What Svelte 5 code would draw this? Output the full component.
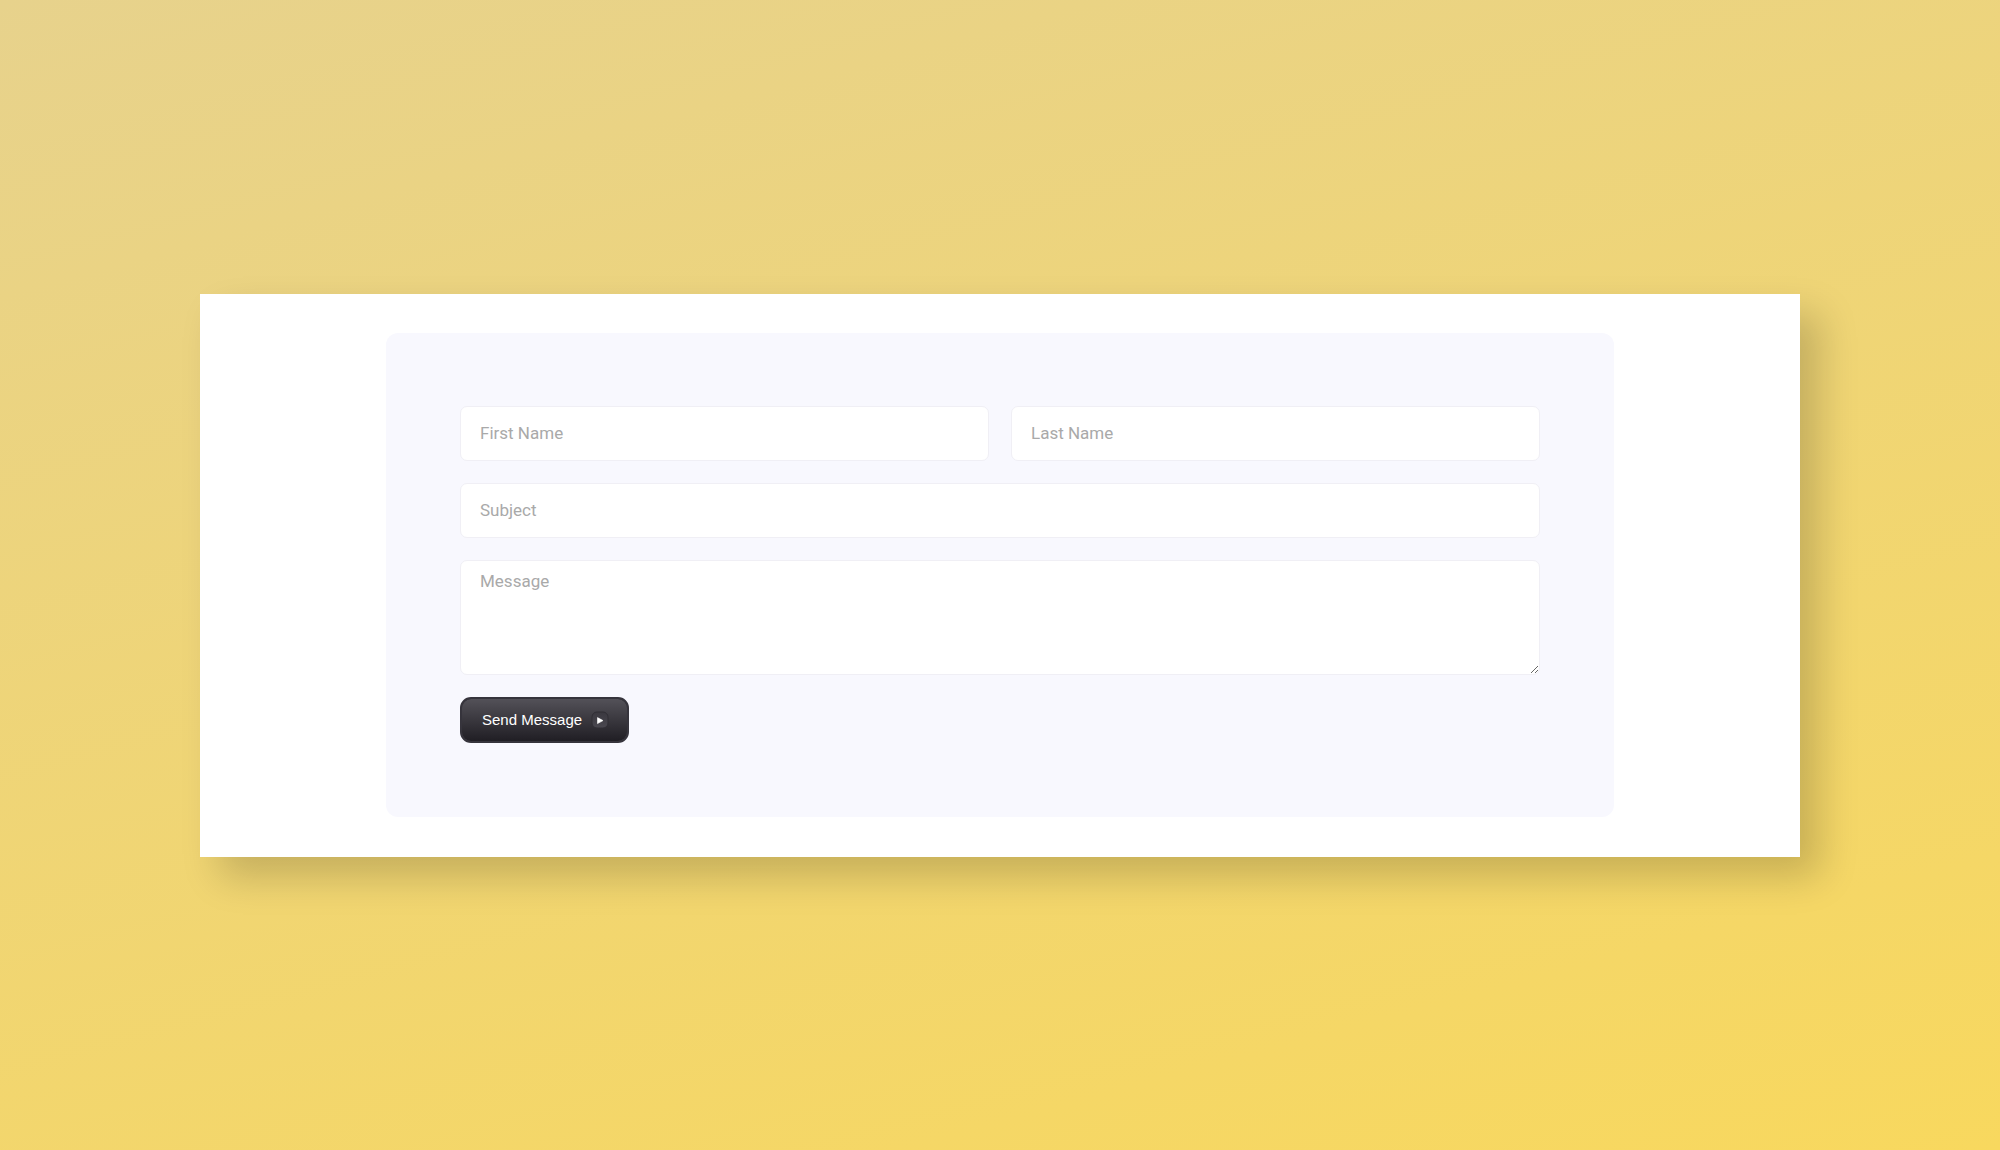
<script lang="ts">
	let firstName = $state('');
	let lastName = $state('');
	let subject = $state('');
	let message = $state('');

	function handleSubmit(e: Event) {
		e.preventDefault();
		firstName = '';
		lastName = '';
		subject = '';
		message = '';
	}
</script>

<main>
	<section class="window">
		<form class="panel" onsubmit={handleSubmit}>
			<div class="row">
				<input type="text" aria-label="First Name" placeholder="First Name" bind:value={firstName} />
				<input type="text" aria-label="Last Name" placeholder="Last Name" bind:value={lastName} />
			</div>
			<input type="text" aria-label="Subject" placeholder="Subject" bind:value={subject} />
			<textarea aria-label="Message" placeholder="Message" bind:value={message}></textarea>

			<button type="submit">
				Send Message
				<svg width="18" height="18" viewBox="0 0 18 18" aria-hidden="true">
					<defs>
						<linearGradient id="badge" x1="0" y1="0" x2="0" y2="1">
							<stop offset="0" stop-color="#3a383f" />
							<stop offset="1" stop-color="#4a4850" />
						</linearGradient>
					</defs>
					<rect x="1" y="1" width="16" height="16" rx="5" fill="url(#badge)" stroke="#302e35" />
					<path d="M6.5 6.6v6L12 9.6z" fill="#fff" stroke="#fff" stroke-width="0.6" stroke-linejoin="round" />
				</svg>
			</button>
		</form>
	</section>
</main>

<style>
	:global(body) {
		margin: 0;
	}

	main {
		min-height: 100vh;
		box-sizing: border-box;
		display: flex;
		align-items: center;
		justify-content: center;
		background: linear-gradient(165deg, #e7d28c, #f8d85e);
	}

	.window {
		width: 80%;
		box-sizing: border-box;
		padding: 39px 24px 40px;
		background: #fff;
		box-shadow: 20px 20px 36px rgba(0, 0, 0, 0.18);
	}

	.panel {
		max-width: 1228px;
		box-sizing: border-box;
		margin: 0 auto;
		padding: 73px 74px 74px;
		display: flex;
		flex-direction: column;
		gap: 22px;
		background: #f8f8fe;
		border-radius: 12px;
	}

	.row {
		display: grid;
		grid-template-columns: 1fr 1fr;
		gap: 22px;
	}

	input,
	textarea {
		width: 100%;
		box-sizing: border-box;
		padding: 8px 19px;
		border: 1px solid #f0eff5;
		border-radius: 7px;
		background: #fff;
		color: #333;
		font-family: Roboto, sans-serif;
		font-size: 17px;
		line-height: 24px;
	}

	input {
		height: 55px;
	}

	textarea {
		display: block;
		height: 115px;
		resize: vertical;
	}

	input::placeholder,
	textarea::placeholder {
		color: #a9a9a9;
		opacity: 1;
	}

	button {
		align-self: flex-start;
		display: flex;
		align-items: center;
		gap: 9px;
		height: 46px;
		padding: 0 18px 0 20px;
		border: 2px solid #36343c;
		border-radius: 11px;
		background: linear-gradient(#535158, #201e24) padding-box, #36343c;
		color: #fff;
		font-family: 'Liberation Sans', Arial, sans-serif;
		font-size: 15px;
		line-height: 20px;
		cursor: pointer;
	}
</style>
